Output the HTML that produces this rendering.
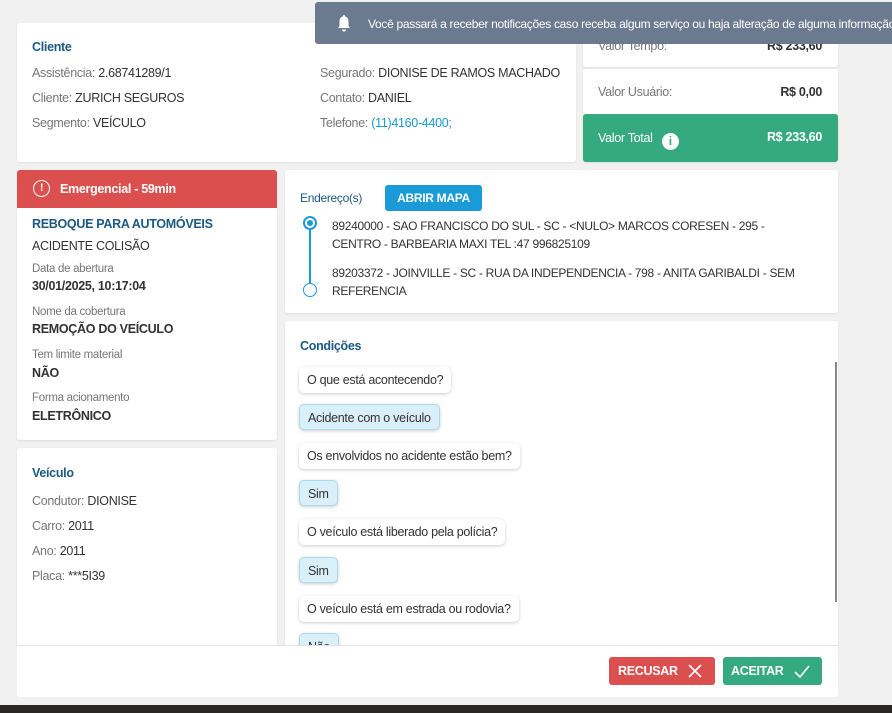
<!DOCTYPE html><html><head><style>
*{box-sizing:border-box;margin:0;padding:0}
body{width:892px;height:713px;background:#f1f1f1;font-family:"Liberation Sans",sans-serif;font-size:12.5px;color:#333;position:relative;overflow:hidden;letter-spacing:-0.3px}
.card{position:absolute;background:#fff;border-radius:3px;box-shadow:0 1px 2px rgba(0,0,0,.08)}
.t{color:#1c5a85;font-weight:bold;font-size:12.5px}
.l{color:#777}
.a{position:absolute;white-space:nowrap}
.q{position:absolute;left:14px;height:26px;line-height:26px;padding:0 8px;border-radius:5px;background:#fff;box-shadow:0 1px 3px rgba(0,0,0,.2);white-space:nowrap}
.r{background:#d9eff9;border:1px solid #a9dbef}
</style></head><body>
<div class="card" style="left:17px;top:23px;width:559px;height:139px">
<div class="a t" style="left:15px;top:17px">Cliente</div>
<div class="a" style="left:15px;top:43px"><span class="l">Assistência:</span> 2.68741289/1</div>
<div class="a" style="left:15px;top:68px"><span class="l">Cliente:</span> ZURICH SEGUROS</div>
<div class="a" style="left:15px;top:93px"><span class="l">Segmento:</span> VEÍCULO</div>
<div class="a" style="left:303px;top:43px"><span class="l">Segurado:</span> DIONISE DE RAMOS MACHADO</div>
<div class="a" style="left:303px;top:68px"><span class="l">Contato:</span> DANIEL</div>
<div class="a" style="left:303px;top:93px"><span class="l">Telefone:</span> <span style="color:#1a9ad6">(11)4160-4400;</span></div>
</div>
<div class="card" style="left:583px;top:23px;width:255px;height:44px"><div class="a l" style="left:15px;top:16px">Valor Tempo:</div><div class="a" style="right:16px;top:16px;font-weight:bold">R$ 233,60</div></div>
<div class="card" style="left:583px;top:69px;width:255px;height:45px"><div class="a l" style="left:15px;top:16px">Valor Usuário:</div><div class="a" style="right:16px;top:16px;font-weight:bold">R$ 0,00</div></div>
<div class="card" style="left:583px;top:114px;width:255px;height:48px;background:#35a97f;color:#fff"><div class="a" style="left:15px;top:17px">Valor Total <span style="display:inline-block;width:17px;height:17px;border-radius:50%;background:#fff;color:#35a97f;text-align:center;font-weight:bold;line-height:17px;font-size:12px;margin-left:6px;vertical-align:-3px">i</span></div><div class="a" style="right:16px;top:16px;font-weight:bold">R$ 233,60</div></div>
<div class="a" style="left:315px;top:2px;width:590px;height:42px;background:#6b7a8f;color:#fff;border-radius:3px;font-size:12px">
<svg class="a" style="left:22px;top:12px" width="14" height="18" viewBox="0 0 14 18"><path d="M7 1c-1 0-1 1-1 1.5C3.5 3 2.5 5 2.5 7.5V12L1 14h12l-1.5-2V7.5C11.5 5 10.5 3 8 2.5 8 2 8 1 7 1zM5 15.5a2 2 0 004 0z" fill="#fff"/></svg>
<div class="a" style="left:53px;top:15px">Você passará a receber notificações caso receba algum serviço ou haja alteração de alguma informação</div></div>
<div class="card" style="left:17px;top:170px;width:260px;height:270px">
<div style="background:#db4f4f;height:38px;border-radius:3px 3px 0 0;color:#fff;font-weight:bold;position:relative"><span class="a" style="left:16px;top:10px;width:17px;height:17px;border:1.5px solid #fff;border-radius:50%;text-align:center;line-height:14px;font-size:11px">!</span><span class="a" style="left:43px;top:12px">Emergencial - 59min</span></div>
<div class="a t" style="left:15px;top:47px">REBOQUE PARA AUTOMÓVEIS</div>
<div class="a" style="left:15px;top:69px">ACIDENTE COLISÃO</div>
<div class="a l" style="left:15px;top:93px;font-size:11.5px">Data de abertura</div>
<div class="a" style="left:15px;top:109px;font-weight:bold">30/01/2025, 10:17:04</div>
<div class="a l" style="left:15px;top:136px;font-size:11.5px">Nome da cobertura</div>
<div class="a" style="left:15px;top:152px;font-weight:bold">REMOÇÃO DO VEÍCULO</div>
<div class="a l" style="left:15px;top:179px;font-size:11.5px">Tem limite material</div>
<div class="a" style="left:15px;top:196px;font-weight:bold">NÃO</div>
<div class="a l" style="left:15px;top:222px;font-size:11.5px">Forma acionamento</div>
<div class="a" style="left:15px;top:239px;font-weight:bold">ELETRÔNICO</div>
</div>
<div class="card" style="left:17px;top:448px;width:260px;height:200px">
<div class="a t" style="left:15px;top:18px">Veículo</div>
<div class="a" style="left:15px;top:46px"><span class="l">Condutor:</span> DIONISE</div>
<div class="a" style="left:15px;top:71px"><span class="l">Carro:</span> 2011</div>
<div class="a" style="left:15px;top:96px"><span class="l">Ano:</span> 2011</div>
<div class="a" style="left:15px;top:121px"><span class="l">Placa:</span> ***5I39</div>
</div>
<div class="card" style="left:285px;top:170px;width:553px;height:143px;font-size:12px">
<div class="a" style="left:15px;top:21px;color:#1c5a85">Endereço(s)</div>
<div class="a" style="left:100px;top:15px;width:97px;height:26px;background:#1a9ad6;color:#fff;font-weight:bold;border-radius:3px;text-align:center;line-height:26px">ABRIR MAPA</div>
<div class="a" style="left:24px;top:60px;width:2px;height:55px;background:#1a9ad6"></div>
<div class="a" style="left:18px;top:46px;width:14px;height:14px;border:2px solid #1a9ad6;border-radius:50%;background:#fff"><div style="margin:2px;width:6px;height:6px;border-radius:50%;background:#1a9ad6"></div></div>
<div class="a" style="left:18px;top:113px;width:14px;height:14px;border:1.5px solid #1a9ad6;border-radius:50%;background:#fff"></div>
<div class="a" style="left:47px;top:47px;line-height:18px">89240000 - SAO FRANCISCO DO SUL - SC - &lt;NULO&gt; MARCOS CORESEN - 295 -<br>CENTRO - BARBEARIA MAXI TEL :47 996825109</div>
<div class="a" style="left:47px;top:94px;line-height:18px">89203372 - JOINVILLE - SC - RUA DA INDEPENDENCIA - 798 - ANITA GARIBALDI - SEM<br>REFERENCIA</div>
</div>
<div class="card" style="left:285px;top:321px;width:553px;height:330px;overflow:hidden">
<div class="a t" style="left:15px;top:18px">Condições</div>
<div class="q" style="top:46px">O que está acontecendo?</div>
<div class="q r" style="top:83px">Acidente com o veículo</div>
<div class="q" style="top:122px">Os envolvidos no acidente estão bem?</div>
<div class="q r" style="top:159px">Sim</div>
<div class="q" style="top:198px">O veículo está liberado pela polícia?</div>
<div class="q r" style="top:236px">Sim</div>
<div class="q" style="top:275px">O veículo está em estrada ou rodovia?</div>
<div class="q r" style="top:312px">Não</div>
<div class="a" style="left:550px;top:41px;width:2px;height:240px;background:#888"></div>
</div>
<div class="a" style="left:17px;top:645px;width:821px;height:52px;background:#fff;border-top:1px solid #e4e4e4;border-radius:0 0 3px 3px"></div>
<div class="a" style="left:609px;top:657px;width:106px;height:28px;background:#db4f4f;color:#fff;font-weight:bold;border-radius:3px;line-height:28px;padding-left:9px">RECUSAR<svg style="position:absolute;left:79px;top:7px" width="14" height="14"><path d="M1 1L13 13M13 1L1 13" stroke="#fff" stroke-width="1.6"/></svg></div>
<div class="a" style="left:723px;top:657px;width:99px;height:28px;background:#35a97f;color:#fff;font-weight:bold;border-radius:3px;line-height:28px;padding-left:8px">ACEITAR<svg style="position:absolute;left:71px;top:7px" width="16" height="14"><path d="M1 8L6 13L15 2" stroke="#fff" stroke-width="1.6" fill="none"/></svg></div>
<div class="a" style="left:0;top:705px;width:892px;height:8px;background:#2a2624"></div>
</body></html>
